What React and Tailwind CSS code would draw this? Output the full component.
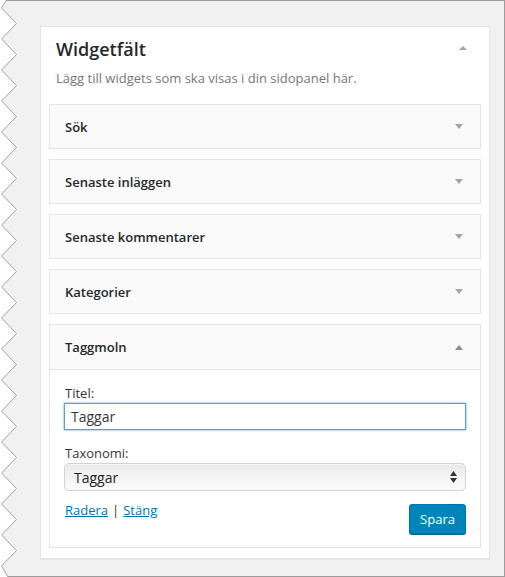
import React from "react";

function Tri({ dir = "down", color = "#a0a5aa", w = 8, h = 5 }) {
  const pts = dir === "down" ? `0,0 ${w},0 ${w / 2},${h}` : `0,${h} ${w},${h} ${w / 2},0`;
  return (
    <svg width={w} height={h} viewBox={`0 0 ${w} ${h}`} className="block">
      <polygon points={pts} fill={color} />
    </svg>
  );
}

function Zigzag() {
  const pts = [[6.5, 0]];
  for (let k = 0; k < 20; k++) {
    const yl = 8 + 31 * k;
    const yr = 23.5 + 31 * k;
    if (yl < 577) pts.push([1.5, yl]);
    if (yr < 570) pts.push([16.5, yr]);
  }
  pts.push([8, 577]);
  const line = pts.map((p) => p.join(",")).join(" ");
  const poly = "0,0 " + line + " 0,577";
  return (
    <svg className="absolute left-0 top-0" width="20" height="577" viewBox="0 0 20 577">
      <polygon points={poly} fill="#ffffff" />
      <polyline points={line} fill="none" stroke="#a3a3a3" strokeWidth="1" />
    </svg>
  );
}

function Collapsed({ title }) {
  return (
    <div className="h-[45px] border border-[#e5e5e5] bg-[#fafafa] flex items-center justify-between pl-[15px] pr-[17px] mb-[10px]">
      <span className="text-[13px] leading-[18px] font-semibold text-[#23282d]">{title}</span>
      <Tri dir="down" color="#a0a5aa" />
    </div>
  );
}

export default function App() {
  const widgets = ["Sök", "Senaste inläggen", "Senaste kommentarer", "Kategorier"];
  return (
    <div className="relative w-[505px] h-[577px] bg-white overflow-hidden font-['Open_Sans',sans-serif]">
      <div className="w-[505px] h-[577px] bg-[#f1f1f1] border-t border-r border-b border-[#9b9b9b] pl-[40px] pt-[25px]">
        <div className="w-[450px] bg-white border border-[#e5e5e5] shadow-[0_1px_1px_rgba(0,0,0,0.04)]">
          <div className="flex items-center justify-between pl-[15px] pr-[22px] pt-[10px]">
            <h2 className="text-[18px] leading-[24px] font-semibold text-[#23282d]">Widgetfält</h2>
            <div className="mb-[2px]">
              <Tri dir="up" color="#a0a5aa" w={8} h={4} />
            </div>
          </div>
          <p className="pl-[15px] mt-[8px] text-[13px] leading-[18px] text-[#72777c]">
            Lägg till widgets som ska visas i din sidopanel här.
          </p>
          <div className="px-[8px] pt-[17px] pb-[10px]">
            {widgets.map((w) => (
              <Collapsed key={w} title={w} />
            ))}
            <div className="border border-[#e5e5e5] bg-white">
              <div className="h-[45px] bg-[#fafafa] border-b border-[#e5e5e5] flex items-center justify-between pl-[15px] pr-[17px]">
                <span className="text-[13px] leading-[18px] font-semibold text-[#23282d]">Taggmoln</span>
                <Tri dir="up" color="#8c8f94" />
              </div>
              <div className="pl-[14px] pr-[14px] pt-[14px] pb-[13px]">
                <div className="pl-[1px] text-[13px] leading-[18px] text-[#32373c]">Titel:</div>
                <div className="mt-[1px] h-[27px] border border-[#5b9dd9] shadow-[0_0_2px_rgba(30,140,190,0.8)] bg-white flex items-center pl-[6px] text-[14px] text-[#32373c]">
                  Taggar
                </div>
                <div className="pl-[1px] mt-[14px] text-[13px] leading-[18px] text-[#32373c]">Taxonomi:</div>
                <div className="mt-[1px] h-[28px] rounded-[5px] border border-[#d2d2d2] bg-gradient-to-b from-[#e9e9e9] via-[#f4f4f4] to-[#fbfbfb] shadow-[inset_0_1px_1px_rgba(255,255,255,0.6)] flex items-center justify-between pl-[9px] pr-[8px] text-[14px] text-[#222]">
                  <span>Taggar</span>
                  <span className="flex flex-col gap-[2px]">
                    <Tri dir="up" color="#333" w={7} h={5} />
                    <Tri dir="down" color="#333" w={7} h={5} />
                  </span>
                </div>
                <div className="mt-[10px] flex items-start justify-between">
                  <div className="pl-[1px] text-[13px] leading-[18px] text-[#32373c]">
                    <a className="text-[#0073aa] underline">Radera</a>
                    <span className="mx-[4px]">|</span>
                    <a className="text-[#0073aa] underline">Stäng</a>
                  </div>
                  <button className="mt-[3px] h-[30px] w-[57px] rounded-[3px] bg-[#0085ba] border border-[#0073aa] shadow-[0_1px_0_#006799] text-white text-[13px] leading-[18px]">
                    Spara
                  </button>
                </div>
              </div>
            </div>
          </div>
        </div>
      </div>
      <Zigzag />
    </div>
  );
}
